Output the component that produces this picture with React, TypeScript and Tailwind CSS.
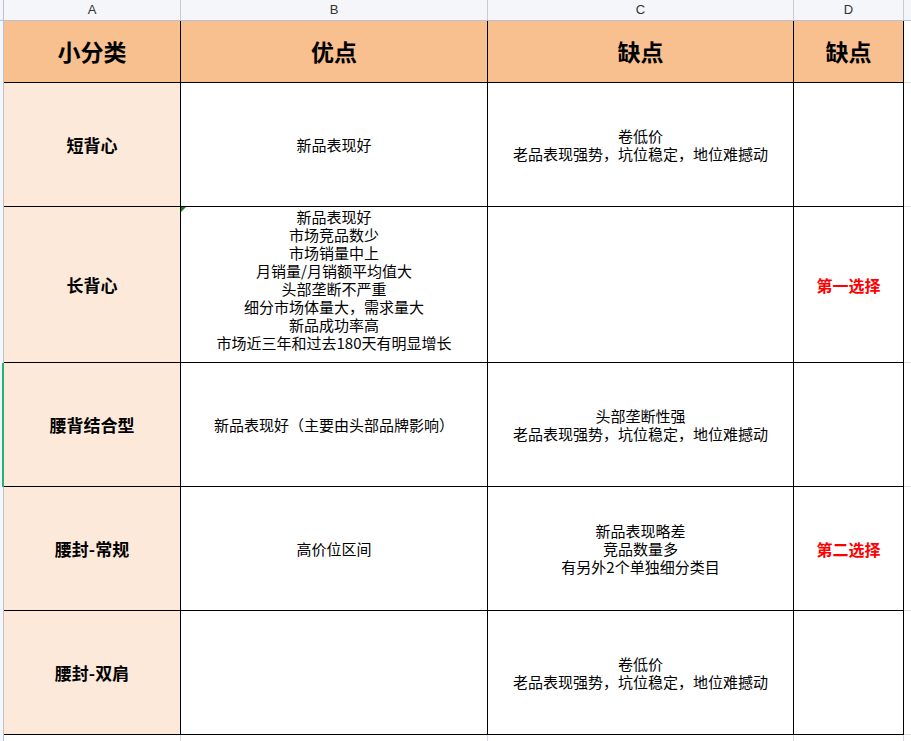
import React from "react";

type Row = {
  a: string;
  b: string[];
  c: string[];
  d: string;
  h: string;
  bPad?: boolean;
  mark?: boolean;
  green?: boolean;
};

const rows: Row[] = [
  { a: "短背心", b: ["新品表现好"], c: ["卷低价", "老品表现强势，坑位稳定，地位难撼动"], d: "", h: "h-[124px]" },
  {
    a: "长背心",
    b: [
      "新品表现好",
      "市场竞品数少",
      "市场销量中上",
      "月销量/月销额平均值大",
      "头部垄断不严重",
      "细分市场体量大，需求量大",
      "新品成功率高",
      "市场近三年和过去180天有明显增长",
    ],
    c: [],
    d: "第一选择",
    h: "h-[156px]",
    bPad: true,
    mark: true,
  },
  {
    a: "腰背结合型",
    b: ["新品表现好（主要由头部品牌影响）"],
    c: ["头部垄断性强", "老品表现强势，坑位稳定，地位难撼动"],
    d: "",
    h: "h-[124px]",
    green: true,
  },
  { a: "腰封-常规", b: ["高价位区间"], c: ["新品表现略差", "竞品数量多", "有另外2个单独细分类目"], d: "第二选择", h: "h-[124px]" },
  { a: "腰封-双肩", b: [], c: ["卷低价", "老品表现强势，坑位稳定，地位难撼动"], d: "", h: "h-[124px]" },
];

const font = "font-['Noto_Sans_CJK_SC','Noto_Sans',sans-serif]";

function Lines({ lines }: { lines: string[] }) {
  return (
    <div className="flex flex-col items-center text-[15px] leading-[18px] text-black">
      {lines.map((l, i) => (
        <div key={i} className="whitespace-nowrap">
          {l}
        </div>
      ))}
    </div>
  );
}

export default function App() {
  return (
    <div className={`w-[911px] h-[741px] overflow-hidden bg-white flex flex-col ${font}`}>
      {/* column letters */}
      <div className="flex h-[21px] shrink-0 bg-[#f4f6f9] border-b border-[#b9c1d4] text-[13px] text-[#333] font-['Liberation_Sans',sans-serif]">
        <div className="w-[4px] shrink-0 border-r border-[#b9c1d4]" />
        <div className="w-[177px] shrink-0 border-r border-[#c6ccda] flex items-center justify-center">A</div>
        <div className="w-[307px] shrink-0 border-r border-[#c6ccda] flex items-center justify-center">B</div>
        <div className="w-[306px] shrink-0 border-r border-[#c6ccda] flex items-center justify-center">C</div>
        <div className="w-[110px] shrink-0 border-r border-[#c6ccda] flex items-center justify-center">D</div>
        <div className="flex-1" />
      </div>

      {/* header row */}
      <div className="flex h-[62px] shrink-0">
        <div className="w-[4px] shrink-0 bg-[#f4f6f9] border-r border-[#b9c1d4]" />
        <div className="w-[177px] shrink-0 bg-[#f8bf8f] border-r border-b border-black flex items-center justify-center text-[23px] font-bold text-black">
          小分类
        </div>
        <div className="w-[307px] shrink-0 bg-[#f8bf8f] border-r border-b border-black flex items-center justify-center text-[23px] font-bold text-black">
          优点
        </div>
        <div className="w-[306px] shrink-0 bg-[#f8bf8f] border-r border-b border-black flex items-center justify-center text-[23px] font-bold text-black">
          缺点
        </div>
        <div className="w-[110px] shrink-0 bg-[#f8bf8f] border-r border-b border-black flex items-center justify-center text-[23px] font-bold text-black">
          缺点
        </div>
        <div className="flex-1 border-b border-[#dde0e8]" />
      </div>

      {rows.map((r, i) => (
        <div key={i} className={`flex ${r.h} shrink-0`}>
          {r.green ? (
            <div className="w-[4px] shrink-0 flex">
              <div className="w-[2px] bg-[#f4f6f9]" />
              <div className="w-[2px] bg-[#21b573]" />
            </div>
          ) : (
            <div className="w-[4px] shrink-0 bg-[#f4f6f9] border-r border-[#b9c1d4]" />
          )}
          <div className="w-[177px] shrink-0 bg-[#fce9da] border-r border-b border-black flex items-center justify-center text-[17px] font-bold text-black">
            {r.a}
          </div>
          <div
            className={`relative w-[307px] shrink-0 border-r border-b border-black flex items-center justify-center ${
              r.bPad ? "pb-[10px]" : ""
            }`}
          >
            {r.mark && (
              <svg className="absolute left-0 top-0" width="5" height="5" viewBox="0 0 5 5">
                <polygon points="0,0 5,0 0,5" fill="#1a7f1a" />
              </svg>
            )}
            <Lines lines={r.b} />
          </div>
          <div className="w-[306px] shrink-0 border-r border-b border-black flex items-center justify-center">
            <Lines lines={r.c} />
          </div>
          <div className="w-[110px] shrink-0 border-r border-b border-black flex items-center justify-center text-[16px] font-bold text-[#ff0000]">
            {r.d}
          </div>
          <div className="flex-1 border-b border-[#dde0e8]" />
        </div>
      ))}

      {/* bottom filler */}
      <div className="flex flex-1">
        <div className="w-[4px] shrink-0 bg-[#f4f6f9] border-r border-[#b9c1d4]" />
        <div className="w-[177px] shrink-0 border-r border-[#d3d7e4]" />
        <div className="w-[307px] shrink-0 border-r border-[#d3d7e4]" />
        <div className="w-[306px] shrink-0 border-r border-[#d3d7e4]" />
        <div className="w-[110px] shrink-0 border-r border-[#d3d7e4]" />
        <div className="flex-1" />
      </div>
    </div>
  );
}
